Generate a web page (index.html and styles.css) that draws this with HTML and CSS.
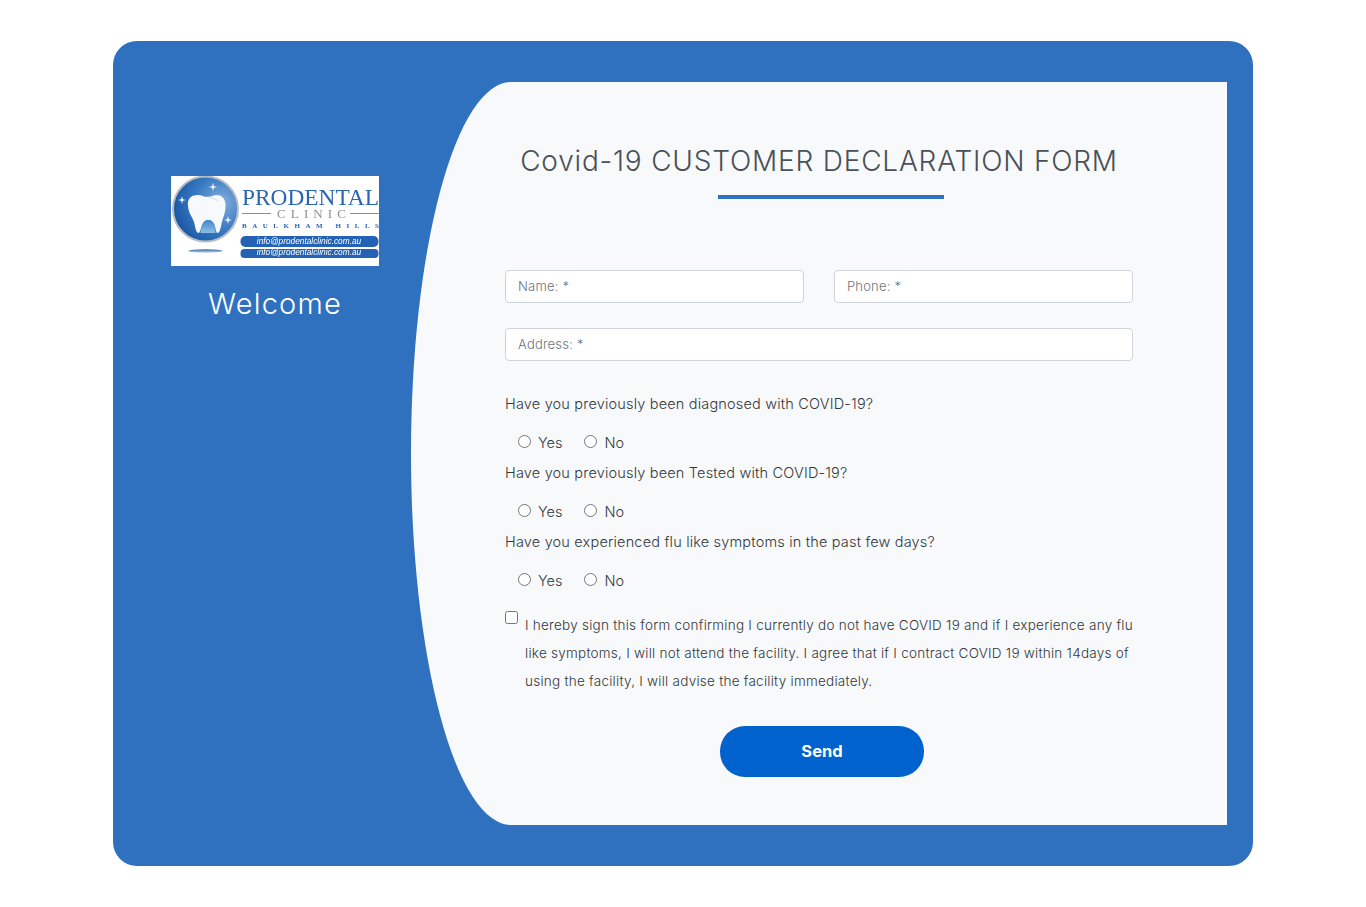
FILE: index.html
```html
<!DOCTYPE html>
<html lang="en">
<head>
<meta charset="utf-8">
<title>Covid-19 Customer Declaration Form</title>
<link rel="stylesheet" href="styles.css">
</head>
<body>
<main class="card">
  <aside class="side">
    <svg class="logo" viewBox="0 0 208 90" width="208" height="90" role="img" aria-label="Prodental Clinic">
      <defs>
        <radialGradient id="ball" cx="0.75" cy="0.4" r="0.8">
          <stop offset="0" stop-color="#86aedb"/>
          <stop offset="0.5" stop-color="#3a7cc4"/>
          <stop offset="1" stop-color="#15529f"/>
        </radialGradient>
        <linearGradient id="shade" x1="0" y1="0" x2="0" y2="1">
          <stop offset="0" stop-color="#1f5fb0"/>
          <stop offset="1" stop-color="#d5dbe6"/>
        </linearGradient>
        <linearGradient id="gum" x1="0" y1="0" x2="0" y2="1">
          <stop offset="0" stop-color="#3f86c8"/>
          <stop offset="1" stop-color="#8fbfe6"/>
        </linearGradient>
      </defs>
      <rect width="208" height="90" fill="#fff"/>
      <circle cx="34.5" cy="33" r="32.5" fill="url(#ball)" stroke="#b9bcc2" stroke-width="2"/>
      <path d="M17 30c-1-8 4-11 10-11 4 0 6 2 9.500 2s6-2 9-2c6 0 9 4 9 11 0 8-3 12-4 18-1 5-2 9-4 9-2.500 0-1-13-9-13s-7 13-10 13c-2 0-3-4-4-9-1-6-6-10-6.500-18z" fill="#f7f9fc"/>
      <path d="M29.500 57c.5-7 2.500-13 7.500-13s7 6 7.500 13z" fill="url(#gum)"/>
      <path d="M36 20c3 2 8 2 11 5" fill="none" stroke="#bcd0e6" stroke-width="0.7"/>
      <path d="M42 6.500l.8 3.700 3.700.8-3.700.8-.8 3.700-.8-3.700-3.700-.8 3.700-.8zM11 20l.8 3.200 3.200.8-3.200.8-.8 3.200-.8-3.200-3.200-.8 3.200-.8zM57 40l.8 3.200 3.200.8-3.200.8-.8 3.200-.8-3.200-3.200-.8 3.200-.8z" fill="#fff"/>
      <ellipse cx="34.500" cy="75" rx="17" ry="1.800" fill="url(#shade)"/>
      <text class="logo-name" x="71" y="29" textLength="137" lengthAdjust="spacingAndGlyphs">PRODENTAL</text>
      <path d="M71 37.500h29M179 37.500h29" stroke="#8b8f96" stroke-width="1"/>
      <text class="logo-clinic" x="106" y="42" textLength="69">CLINIC</text>
      <text class="logo-place" x="71" y="52" textLength="137">BAULKHAM HILLS</text>
      <rect x="69.500" y="60" width="138" height="11" rx="5" fill="#2362b4"/>
      <rect x="69.500" y="73" width="138" height="9" rx="4" fill="#2362b4"/>
      <text class="logo-mail" x="138" y="68">info@prodentalclinic.com.au</text>
      <text class="logo-mail" x="138" y="79">info@prodentalclinic.com.au</text>
    </svg>
    <h2 class="welcome">Welcome</h2>
  </aside>
  <section class="panel">
    <h1 class="title">Covid-19 CUSTOMER DECLARATION FORM</h1>
    <div class="rule"></div>
    <form class="form">
      <div class="fields">
        <input class="field" type="text" placeholder="Name: *">
        <input class="field" type="text" placeholder="Phone: *">
        <input class="field wide" type="text" placeholder="Address: *">
      </div>
      <div class="question">
        <p class="ask">Have you previously been diagnosed with COVID-19?</p>
        <div class="choices">
          <label class="choice"><input type="radio" name="q1" class="radio">Yes</label>
          <label class="choice"><input type="radio" name="q1" class="radio">No</label>
        </div>
      </div>
      <div class="question">
        <p class="ask">Have you previously been Tested with COVID-19?</p>
        <div class="choices">
          <label class="choice"><input type="radio" name="q2" class="radio">Yes</label>
          <label class="choice"><input type="radio" name="q2" class="radio">No</label>
        </div>
      </div>
      <div class="question">
        <p class="ask">Have you experienced flu like symptoms in the past few days?</p>
        <div class="choices">
          <label class="choice"><input type="radio" name="q3" class="radio">Yes</label>
          <label class="choice"><input type="radio" name="q3" class="radio">No</label>
        </div>
      </div>
      <label class="consent">
        <input type="checkbox" class="check">
        <span class="consent-text">I hereby sign this form confirming I currently do not have COVID 19 and if I experience any flu like symptoms, I will not attend the facility. I agree that if I contract COVID 19 within 14days of using the facility, I will advise the facility immediately.</span>
      </label>
      <div class="actions">
        <button class="send" type="button">Send</button>
      </div>
    </form>
  </section>
</main>
</body>
</html>
```
FILE: styles.css
```css
* { box-sizing: border-box; }
html, body { margin: 0; padding: 0; background: #fff; }
body {
  height: 907px;
  padding: 41px 113px;
  font-family: Inter, "Open Sans", sans-serif;
  color: #495057;
}
.card {
  display: flex;
  width: 1140px;
  height: 825px;
  padding: 41px 26px;
  background: #2f71bf;
  border-radius: 24px;
}
.side {
  flex: 0 0 272px;
  display: flex;
  flex-direction: column;
  align-items: center;
  padding-top: 94px;
}
.logo { display: block; filter: blur(0.35px); }
.logo-name { font: 23px "Liberation Serif", serif; fill: #2a66b6; }
.logo-clinic { font: 13px "Liberation Serif", serif; fill: #8b8f96; }
.logo-place { font: 700 7px "Liberation Serif", serif; fill: #2a66b6; }
.logo-mail { font: italic 8.3px "Liberation Sans", sans-serif; fill: #fff; text-anchor: middle; }
.welcome {
  margin: 20px 0 0;
  font-size: 29px;
  font-weight: 300;
  line-height: 36px;
  letter-spacing: 1.2px;
  color: #fff;
}
.panel {
  flex: 1;
  padding: 60px 94px 0;
  background: #f8f9fb;
  border-radius: 100px 0 0 100px / 50% 0 0 50%;
}
.title {
  margin: 0;
  font-size: 28px;
  font-weight: 300;
  line-height: 38px;
  letter-spacing: 0.8px;
  text-align: center;
  color: #495057;
}
.rule {
  width: 226px;
  height: 4px;
  margin: 15px 0 0 213px;
  background: #2f71bf;
}
.form { margin-top: 71px; }
.fields {
  display: grid;
  grid-template-columns: 1fr 1fr;
  gap: 25px 30px;
  margin-bottom: 31px;
}
.field {
  height: 33px;
  padding: 0 12px 2px;
  font: 300 13px Inter, sans-serif;
  letter-spacing: 0.2px;
  color: #495057;
  background: #fff;
  border: 1px solid #ced4da;
  border-radius: 4px;
}
.field::placeholder { color: #6c757d; opacity: 1; }
.wide { grid-column: 1 / -1; }
.question { height: 69px; }
.ask {
  margin: 0;
  font-size: 14.5px;
  font-weight: 300;
  line-height: 24px;
  letter-spacing: 0.18px;
  color: #33383d;
}
.choices {
  display: flex;
  gap: 22px;
  margin-top: 14px;
  padding-left: 13px;
}
.choice {
  display: flex;
  align-items: center;
  height: 24px;
  font-size: 14.5px;
  font-weight: 300;
  color: #33383d;
}
.radio {
  width: 13px;
  height: 13px;
  margin: -2px 7px 0 0;
}
.consent {
  display: flex;
  align-items: flex-start;
  margin-top: 8px;
}
.check {
  flex: none;
  width: 13px;
  height: 13px;
  margin: 4px 7px 0 0;
}
.consent-text {
  font-size: 13.5px;
  font-weight: 300;
  line-height: 28px;
  letter-spacing: 0.25px;
  margin-top: 4px;
  color: #33383d;
}
.actions {
  display: flex;
  justify-content: center;
  padding-left: 6px;
  margin-top: 31px;
}
.send {
  width: 204px;
  height: 51px;
  padding: 0 0 2px;
  font: 700 16.5px Inter, sans-serif;
  color: #fff;
  background: #0062cc;
  border: 0;
  border-radius: 25px;
}
```
